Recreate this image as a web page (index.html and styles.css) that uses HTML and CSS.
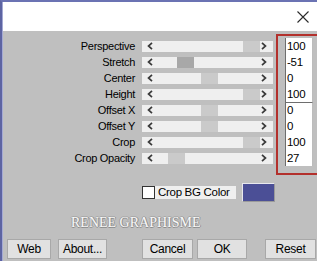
FILE: index.html
```html
<!DOCTYPE html>
<html>
<head>
<meta charset="utf-8">
<link rel="stylesheet" href="styles.css">
</head>
<body>
<div class="window">
  <div class="frame">
    <div class="titlebar">
      <svg class="close" width="12" height="12" viewBox="0 0 12 12"><path d="M0.5 0.5L11.5 11.5M11.5 0.5L0.5 11.5" stroke="#2a2a2a" stroke-width="1.1" fill="none"/></svg>
    </div>
    <div class="content">
      <div class="rows">
        <div class="row"><span class="label">Perspective</span><div class="track"><svg class="arr l" width="6" height="8" viewBox="0 0 6 8"><path d="M5 0.8L1.5 4L5 7.2" stroke="#3a3a3a" stroke-width="1.7" fill="none"/></svg><span class="thumb" style="left:101px"></span><svg class="arr r" width="6" height="8" viewBox="0 0 6 8"><path d="M1 0.8L4.5 4L1 7.2" stroke="#3a3a3a" stroke-width="1.7" fill="none"/></svg></div><span class="num">100</span></div>
        <div class="row"><span class="label">Stretch</span><div class="track"><svg class="arr l" width="6" height="8" viewBox="0 0 6 8"><path d="M5 0.8L1.5 4L5 7.2" stroke="#3a3a3a" stroke-width="1.7" fill="none"/></svg><span class="thumb dark" style="left:35px"></span><svg class="arr r" width="6" height="8" viewBox="0 0 6 8"><path d="M1 0.8L4.5 4L1 7.2" stroke="#3a3a3a" stroke-width="1.7" fill="none"/></svg></div><span class="num">-51</span></div>
        <div class="row"><span class="label">Center</span><div class="track"><svg class="arr l" width="6" height="8" viewBox="0 0 6 8"><path d="M5 0.8L1.5 4L5 7.2" stroke="#3a3a3a" stroke-width="1.7" fill="none"/></svg><span class="thumb" style="left:59px"></span><svg class="arr r" width="6" height="8" viewBox="0 0 6 8"><path d="M1 0.8L4.5 4L1 7.2" stroke="#3a3a3a" stroke-width="1.7" fill="none"/></svg></div><span class="num">0</span></div>
        <div class="row"><span class="label">Height</span><div class="track"><svg class="arr l" width="6" height="8" viewBox="0 0 6 8"><path d="M5 0.8L1.5 4L5 7.2" stroke="#3a3a3a" stroke-width="1.7" fill="none"/></svg><span class="thumb" style="left:101px"></span><svg class="arr r" width="6" height="8" viewBox="0 0 6 8"><path d="M1 0.8L4.5 4L1 7.2" stroke="#3a3a3a" stroke-width="1.7" fill="none"/></svg></div><span class="num">100</span></div>
        <div class="row"><span class="label">Offset X</span><div class="track"><svg class="arr l" width="6" height="8" viewBox="0 0 6 8"><path d="M5 0.8L1.5 4L5 7.2" stroke="#3a3a3a" stroke-width="1.7" fill="none"/></svg><span class="thumb" style="left:59px"></span><svg class="arr r" width="6" height="8" viewBox="0 0 6 8"><path d="M1 0.8L4.5 4L1 7.2" stroke="#3a3a3a" stroke-width="1.7" fill="none"/></svg></div><span class="num group">0</span></div>
        <div class="row"><span class="label">Offset Y</span><div class="track"><svg class="arr l" width="6" height="8" viewBox="0 0 6 8"><path d="M5 0.8L1.5 4L5 7.2" stroke="#3a3a3a" stroke-width="1.7" fill="none"/></svg><span class="thumb" style="left:59px"></span><svg class="arr r" width="6" height="8" viewBox="0 0 6 8"><path d="M1 0.8L4.5 4L1 7.2" stroke="#3a3a3a" stroke-width="1.7" fill="none"/></svg></div><span class="num">0</span></div>
        <div class="row"><span class="label">Crop</span><div class="track"><svg class="arr l" width="6" height="8" viewBox="0 0 6 8"><path d="M5 0.8L1.5 4L5 7.2" stroke="#3a3a3a" stroke-width="1.7" fill="none"/></svg><span class="thumb" style="left:101px"></span><svg class="arr r" width="6" height="8" viewBox="0 0 6 8"><path d="M1 0.8L4.5 4L1 7.2" stroke="#3a3a3a" stroke-width="1.7" fill="none"/></svg></div><span class="num">100</span></div>
        <div class="row"><span class="label">Crop Opacity</span><div class="track"><svg class="arr l" width="6" height="8" viewBox="0 0 6 8"><path d="M5 0.8L1.5 4L5 7.2" stroke="#3a3a3a" stroke-width="1.7" fill="none"/></svg><span class="thumb" style="left:26px"></span><svg class="arr r" width="6" height="8" viewBox="0 0 6 8"><path d="M1 0.8L4.5 4L1 7.2" stroke="#3a3a3a" stroke-width="1.7" fill="none"/></svg></div><span class="num">27</span></div>
      </div>
      <div class="check-row">
        <span class="checkbox"></span>
        <span class="check-label">Crop BG Color</span>
        <span class="swatch"></span>
      </div>
      <div class="watermark">RENEE GRAPHISME</div>
      <div class="buttons">
        <span class="btn web">Web</span>
        <span class="btn about">About...</span>
        <span class="btn cancel">Cancel</span>
        <span class="btn ok">OK</span>
        <span class="btn reset">Reset</span>
      </div>
    </div>
  </div>
  <div class="annot"></div>
</div>
</body>
</html>
```

FILE: styles.css
```css
html, body {
  margin: 0;
  padding: 0;
  width: 317px;
  height: 261px;
  overflow: hidden;
  background: #bfbfbf;
}

.window {
  position: relative;
  width: 315px;
  height: 259px;
  overflow: hidden;
  border-left: 2px solid #5d64a2;
  border-top: 2px solid #6b73b3;
  font-family: "Liberation Sans", Arial, sans-serif;
  font-size: 11px;
  letter-spacing: -0.3px;
  color: #000;
}

.frame {
  height: 259px;
  border-left: 1px solid #a4a9d4;
  display: flex;
  flex-direction: column;
}

.titlebar {
  height: 29px;
  background: #fff;
  display: flex;
  align-items: center;
  justify-content: flex-end;
  padding-right: 8px;
}

.close {
  display: block;
  margin-top: 1px;
}

.content {
  flex: 1;
  background: #bfbfbf;
  padding-top: 7px;
}

.rows {
  display: flex;
  flex-direction: column;
}

.row {
  display: grid;
  grid-template-columns: 132px 131px 29px;
  height: 16px;
  align-items: center;
}

.label {
  text-align: right;
  line-height: 16px;
}

.track {
  position: relative;
  height: 11px;
  margin-left: 7px;
  width: 131px;
  background: #efefef;
}

.arr {
  position: absolute;
  top: 1.5px;
}

.arr.l { left: 5px; }
.arr.r { right: 6px; }

.thumb {
  position: absolute;
  top: 0;
  width: 17px;
  height: 11px;
  background: #cacaca;
}

.thumb.dark {
  background: #a8a8a8;
}

.num {
  margin-left: 19px;
  width: 28px;
  height: 16px;
  box-sizing: border-box;
  background: #fff;
  border-left: 1px solid #6e6e6e;
  border-right: 1px solid #bcbcbc;
  line-height: 16px;
  padding-left: 1px;
  font-size: 11.5px;
}

.num.group {
  border-top: 1px solid #6e6e6e;
  line-height: 15px;
}

.check-row {
  display: flex;
  align-items: center;
  margin-top: 17px;
  height: 19px;
  padding-left: 139px;
}

.checkbox {
  width: 11px;
  height: 11px;
  background: #fff;
  border: 1px solid #333;
}

.check-label {
  width: 78px;
  height: 13px;
  line-height: 13px;
  padding-left: 3px;
  background: #efefef;
  font-size: 11.5px;
}

.swatch {
  margin-left: 6px;
  width: 31px;
  height: 17px;
  background: #4b4f96;
  border: 1px solid #e8e8ee;
  border-right-color: #9a9a9a;
  border-bottom-color: #9a9a9a;
}

.watermark {
  margin-top: 11px;
  height: 19px;
  line-height: 19px;
  padding-left: 68px;
  font-family: "Liberation Serif", "Times New Roman", serif;
  font-size: 14px;
  letter-spacing: 0;
  color: #f8f8f8;
  text-shadow: 1px 0 0 #8c8c8c, -1px 0 0 #a0a0a0, 0 1px 0 #8c8c8c, 0 -1px 0 #a8a8a8;
}

.buttons {
  display: flex;
  margin-top: 7px;
  height: 20px;
}

.btn {
  box-sizing: border-box;
  height: 20px;
  line-height: 18px;
  text-align: center;
  background: #e1e1e1;
  border: 1px solid #a8a8a8;
  font-size: 12px;
}

.web { margin-left: 4px; width: 44px; }
.about { margin-left: 7px; width: 49px; }
.cancel { margin-left: 35px; width: 51px; }
.ok { margin-left: 4px; width: 50px; }
.reset { margin-left: 18px; width: 51px; }

.annot {
  position: absolute;
  left: 274px;
  top: 32px;
  width: 60px;
  height: 137px;
  border: 2px solid #b3302c;
}
```
